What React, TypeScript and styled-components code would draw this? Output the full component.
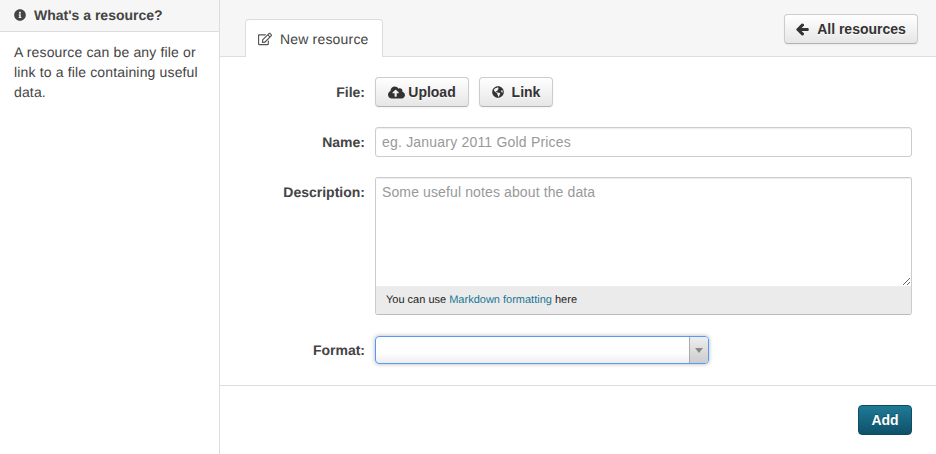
import styled, { createGlobalStyle } from "styled-components";
import { FaInfoCircle, FaRegEdit, FaCloudUploadAlt, FaGlobeAmericas, FaArrowLeft } from "react-icons/fa";

const GlobalStyle = createGlobalStyle`
  html, body {
    margin: 0;
    padding: 0;
    background: #fff;
    font-family: "Liberation Sans", Arial, sans-serif;
    font-size: 14px;
    line-height: 20px;
    color: #444;
    text-rendering: geometricPrecision;
  }
  * { box-sizing: border-box; }
`;

const Page = styled.div`
  display: flex;
  width: 936px;
  height: 454px;
  overflow: hidden;
`;

const Sidebar = styled.aside`
  width: 220px;
  flex: none;
  border-right: 1px solid #ddd;
`;

const SideHeading = styled.h2`
  display: flex;
  align-items: center;
  gap: 8px;
  height: 32px;
  margin: 0;
  padding: 0 14px 1px;
  background: #f6f6f6;
  border-bottom: 1px solid #ddd;
  font-size: 14px;
  font-weight: bold;
  color: #444;
`;

const SideText = styled.p`
  margin: 0;
  padding: 10px 14px;
  color: #444;
  letter-spacing: 0.15px;
`;

const Main = styled.main`
  flex: 1;
  min-width: 0;
`;

const TabBar = styled.div`
  display: flex;
  justify-content: space-between;
  height: 57px;
  padding: 14px 18px 0 25px;
  background: #f6f6f6;
  border-bottom: 1px solid #ddd;
`;

const Tab = styled.div`
  display: flex;
  align-items: center;
  gap: 8px;
  width: 138px;
  height: 38px;
  margin-top: 5px;
  padding: 0 0 0 12px;
  background: #fff;
  border: 1px solid #ddd;
  border-bottom: none;
  border-radius: 4px 4px 0 0;
  color: #444;
  letter-spacing: 0.18px;
  svg { color: #555; }
`;

const Button = styled.button`
  display: inline-flex;
  align-items: center;
  justify-content: center;
  gap: ${(p) => p.$gap ?? 8}px;
  width: ${(p) => p.$width}px;
  height: 30px;
  padding: 0;
  background: linear-gradient(#fff, #e6e6e6);
  border: 1px solid #ccc;
  border-bottom-color: #b3b3b3;
  border-radius: 4px;
  box-shadow: 0 1px 2px rgba(0, 0, 0, 0.05);
  font: bold 14px/20px "Liberation Sans", Arial, sans-serif;
  color: #333;
  text-shadow: 0 1px 1px rgba(255, 255, 255, 0.75);
`;

const BackIcon = styled(FaArrowLeft)`
  stroke: currentColor;
  stroke-width: 40px;
`;

const Form = styled.form`
  display: flex;
  flex-direction: column;
  height: 397px;
  margin: 0;
`;

const Fields = styled.div`
  display: flex;
  flex-direction: column;
  gap: 20px;
  padding: 20px 24px 21px 0;
  border-bottom: 1px solid #ddd;
`;

const Row = styled.div`
  display: flex;
  gap: 10px;
`;

const Label = styled.label`
  width: 145px;
  flex: none;
  padding-top: 5px;
  text-align: right;
  font-weight: bold;
  color: #444;
`;

const ButtonGroup = styled.div`
  display: flex;
  gap: 10px;
`;

const Input = styled.input`
  width: 537px;
  height: 30px;
  padding: 4px 6px;
  background: #fff;
  border: 1px solid #ccc;
  border-radius: 3px;
  box-shadow: inset 0 1px 1px rgba(0, 0, 0, 0.075);
  font: 14px/20px "Liberation Sans", Arial, sans-serif;
  letter-spacing: 0.2px;
  color: #555;
  &::placeholder { color: #999; opacity: 1; }
`;

const EditorBox = styled.div`
  display: flex;
  flex-direction: column;
  width: 537px;
  height: 138px;
  border: 1px solid #ccc;
  border-bottom-color: #bbb;
  border-radius: 3px;
  overflow: hidden;
`;

const TextArea = styled.textarea`
  display: block;
  flex: none;
  width: 100%;
  height: 108px;
  padding: 4px 6px;
  background: #fff;
  border: none;
  box-shadow: inset 0 1px 1px rgba(0, 0, 0, 0.075);
  font: 14px/20px "Liberation Sans", Arial, sans-serif;
  letter-spacing: 0.12px;
  color: #555;
  resize: vertical;
  &::placeholder { color: #999; opacity: 1; }
`;

const Hint = styled.div`
  flex: 1;
  padding: 5px 10px;
  background: #ebebeb;
  font-size: 11px;
  line-height: 19px;
  color: #222;
  a { color: #187794; text-decoration: none; }
`;

const SelectBox = styled.div`
  display: flex;
  justify-content: flex-end;
  width: 334px;
  height: 28px;
  margin-top: 1px;
  background: linear-gradient(#fff 60%, #eee);
  border: 1px solid #5897fb;
  border-radius: 4px;
  box-shadow: 0 0 4px rgba(0, 0, 0, 0.3);
  overflow: hidden;
`;

const SelectArrow = styled.span`
  display: flex;
  align-items: center;
  justify-content: center;
  width: 19px;
  background: linear-gradient(#eee, #ccc);
  border-left: 1px solid #aaa;
  &::after {
    content: "";
    border-style: solid;
    border-width: 5px 4px 0;
    border-color: #888 transparent transparent;
  }
`;

const Actions = styled.div`
  display: flex;
  justify-content: flex-end;
  padding: 19px 24px 0 0;
`;

const PrimaryButton = styled.button`
  width: 54px;
  height: 30px;
  padding: 0;
  background: linear-gradient(#1f7a96, #0e5169);
  border: 1px solid #0e4c63;
  border-radius: 4px;
  font: bold 14px/20px "Liberation Sans", Arial, sans-serif;
  color: #fff;
  text-shadow: 0 -1px 0 rgba(0, 0, 0, 0.25);
`;

export default function App() {
  return (
    <>
      <GlobalStyle />
      <Page>
        <Sidebar>
          <SideHeading>
            <FaInfoCircle size={12} />
            What's a resource?
          </SideHeading>
          <SideText>A resource can be any file or link to a file containing useful data.</SideText>
        </Sidebar>
        <Main>
          <TabBar>
            <Tab>
              <FaRegEdit size={14} />
              New resource
            </Tab>
            <Button type="button" $width={134}>
              <BackIcon size={13} />
              All resources
            </Button>
          </TabBar>
          <Form>
            <Fields>
              <Row>
                <Label>File:</Label>
                <ButtonGroup>
                  <Button type="button" $width={94} $gap={3}>
                    <FaCloudUploadAlt size={17} />
                    Upload
                  </Button>
                  <Button type="button" $width={74}>
                    <FaGlobeAmericas size={12} />
                    Link
                  </Button>
                </ButtonGroup>
              </Row>
              <Row>
                <Label>Name:</Label>
                <Input placeholder="eg. January 2011 Gold Prices" />
              </Row>
              <Row>
                <Label>Description:</Label>
                <EditorBox>
                  <TextArea placeholder="Some useful notes about the data" />
                  <Hint>
                    You can use <a href="#markdown">Markdown formatting</a> here
                  </Hint>
                </EditorBox>
              </Row>
              <Row>
                <Label>Format:</Label>
                <SelectBox>
                  <SelectArrow />
                </SelectBox>
              </Row>
            </Fields>
            <Actions>
              <PrimaryButton type="button">Add</PrimaryButton>
            </Actions>
          </Form>
        </Main>
      </Page>
    </>
  );
}
